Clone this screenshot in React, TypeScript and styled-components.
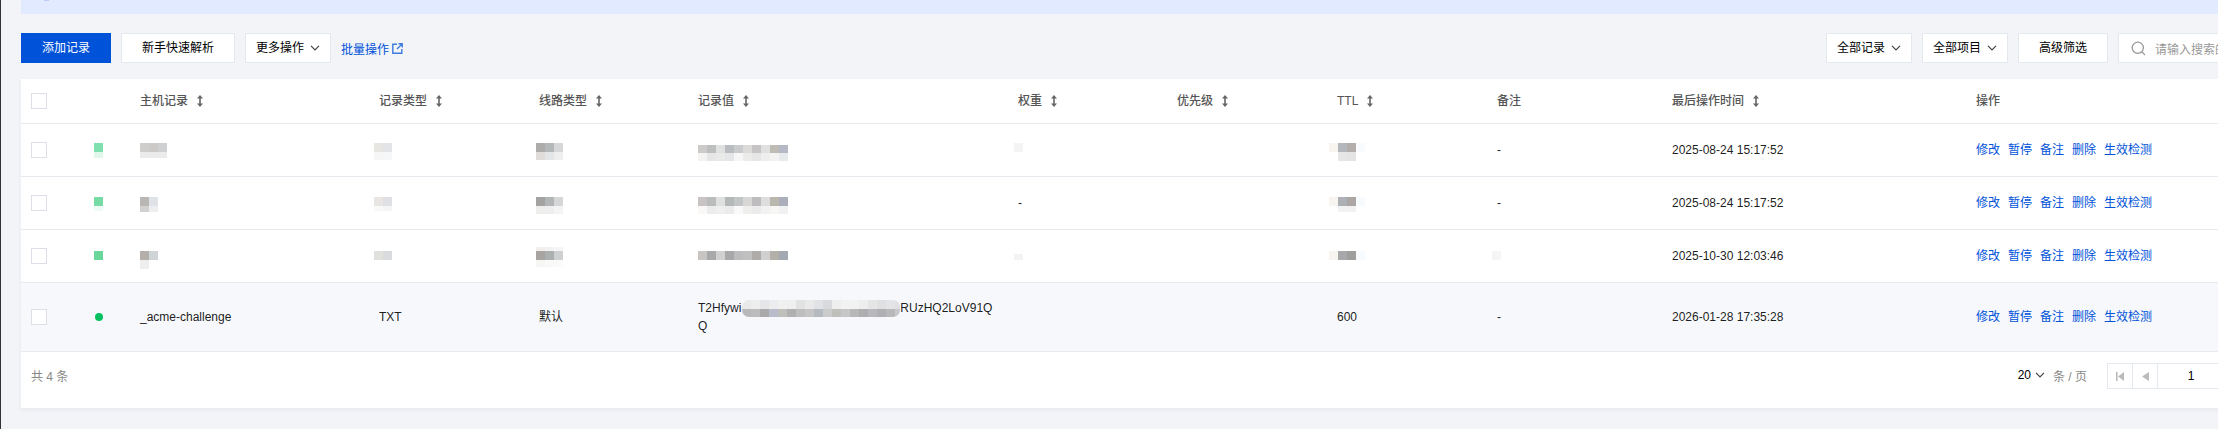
import React from "react";
import styled, { createGlobalStyle } from "styled-components";

const Global = createGlobalStyle`
  html, body { margin: 0; padding: 0; background: #f2f4f8; }
  body { font-family: "Liberation Sans", "Noto Sans CJK SC", sans-serif; font-size: 12px; color: rgba(0,0,0,.9); }
  svg { flex: none; }
`;

const Page = styled.div`
  width: 2218px; height: 429px; box-sizing: border-box; overflow: hidden;
  border-left: 1px solid #333; padding-left: 20px; background: #f2f4f8;
`;
const Banner = styled.div`height: 14px; background: #e1eaff;`;
const BannerMark = styled.div`width: 5px; height: 1px; margin-left: 23px; background: #b9cdf6;`;

const Toolbar = styled.div`display: flex; align-items: center; height: 30px; margin-top: 19px; gap: 10px;`;
const Btn = styled.button<{ $w: number; $primary?: boolean }>`
  box-sizing: border-box; width: ${p => p.$w}px; height: 30px; padding: 0; flex: none;
  display: inline-flex; align-items: center; justify-content: center; gap: 6px;
  font: inherit; line-height: 28px;
  border: 1px solid ${p => (p.$primary ? "#0052d9" : "#e4e8ef")};
  background: ${p => (p.$primary ? "#0052d9" : "#fff")};
  color: ${p => (p.$primary ? "#fff" : "#000")};
`;
const LinkText = styled.a`display: inline-flex; align-items: center; gap: 3px; color: #0052d9;`;
const Spacer = styled.div`flex: 1;`;
const Search = styled.div`
  box-sizing: border-box; width: 110px; height: 30px; flex: none; margin-right: -10px;
  display: flex; align-items: center; gap: 9px; padding-left: 12px; overflow: hidden; white-space: nowrap;
  background: #fff; border: 1px solid #e4e8ef; color: #999;
`;

const Table = styled.div`
  margin-top: 16px; background: #fff; box-shadow: 0 2px 4px rgba(54,58,80,.06);
`;
const cols = "73px 46px 239px 160px 159px 320px 159px 160px 160px 175px 304px 242px";
const Row = styled.div<{ $h: number; $active?: boolean }>`
  display: grid; grid-template-columns: ${cols}; box-sizing: border-box; height: ${p => p.$h}px;
  border-bottom: 1px solid #e7eaef; background: ${p => (p.$active ? "#f6f8fc" : "#fff")};
`;
const Cell = styled.div`display: flex; align-items: center; min-width: 0; line-height: 18px;`;
const CheckCell = styled(Cell)`padding-left: 10px;`;
const HeadCell = styled(Cell)`gap: 9px; color: #555; font-weight: 500;`;
const Checkbox = styled.span`
  box-sizing: border-box; display: block; width: 16px; height: 16px; background: #fff; border: 1px solid #dcdfe8;
`;
const Dot = styled.span`display: block; width: 8px; height: 8px; margin-left: 1px; border-radius: 50%; background: #07c160;`;

const Mosaic = styled.span<{ $top: number; $left?: number }>`
  display: flex; flex-direction: column; align-self: flex-start;
  margin-top: ${p => p.$top}px; margin-left: ${p => p.$left ?? 0}px;
`;
const MosaicRow = styled.span`display: flex;`;
const MosaicCell = styled.span<{ $c: string; $h: number; $w: number }>`
  display: block; flex: none; width: ${p => p.$w}px; height: ${p => p.$h}px; background: ${p => p.$c};
`;

const ValueLines = styled.div`display: flex; flex-direction: column;`;
const ValueLine = styled.div`display: flex; align-items: center; height: 18px; white-space: nowrap;`;
const Blur = styled.span`
  display: flex; flex-direction: column; width: 158px; height: 17px; margin: 0 0 0 1px;
  border-radius: 7px; overflow: hidden;
`;

const Actions = styled(Cell)`gap: 8px;`;
const ActionLink = styled.a`color: #0052d9;`;

const Footer = styled.div`
  display: flex; align-items: center; height: 56px; box-sizing: border-box; padding-left: 10px;
  padding-bottom: 10px; color: #888; overflow: hidden;
`;
const PageSize = styled.span`display: inline-flex; align-items: center; gap: 4px; color: #000;`;
const PerPage = styled.span`margin-left: 8px; margin-right: 20px;`;
const Pager = styled.div`
  display: flex; flex: none; height: 26px; box-sizing: border-box; border: 1px solid #e4e8ef; margin-right: -7px; margin-top: 2px;
`;
const PagerBtn = styled.span`
  box-sizing: border-box; width: 25px; display: flex; align-items: center; justify-content: center;
  border-right: 1px solid #e4e8ef;
`;
const PagerInput = styled.span`width: 66px; text-align: center; line-height: 24px; color: #000;`;

const Sort = () => (
  <svg width="6" height="12" viewBox="0 0 6 12" fill="#666">
    <path d="M3 0 6 3.6H3.8v4.8H6L3 12 0 8.4h2.2V3.6H0z" />
  </svg>
);
const Chevron = () => (
  <svg width="10" height="6" viewBox="0 0 10 6" fill="none" stroke="#444" strokeWidth="1.2">
    <path d="M1 .8 5 4.8 9 .8" />
  </svg>
);
const External = () => (
  <svg width="11" height="11" viewBox="0 0 11 11" fill="none" stroke="#3d7be0" strokeWidth="1.4">
    <path d="M5 1.2H.8v9h9V6M6.5.8h3.7v3.7M10 1 5 6" />
  </svg>
);
const SearchIcon = () => (
  <svg width="15" height="15" viewBox="0 0 15 15" fill="none" stroke="#999" strokeWidth="1.3">
    <circle cx="6.8" cy="6.8" r="5.6" />
    <path d="m11 11 3 3" />
  </svg>
);
const First = () => (
  <svg width="8" height="9" viewBox="0 0 8 9" fill="#bbb"><path d="M0 0h1.6v9H0zM8 0v9L2 4.500z" /></svg>
);
const Prev = () => (
  <svg width="7" height="9" viewBox="0 0 7 9" fill="#bbb"><path d="M7 0v9L0 4.500z" /></svg>
);

type M = { top: number; left?: number; w?: number; rows: { h: number; c: string[] }[] } | string;

const MosaicView = ({ m }: { m: M }) =>
  typeof m === "string" ? (
    <>{m}</>
  ) : (
    <Mosaic $top={m.top} $left={m.left}>
      {m.rows.map((r, i) => (
        <MosaicRow key={i}>
          {r.c.map((c, j) => (
            <MosaicCell key={j} $c={c} $h={r.h} $w={m.w ?? 9} />
          ))}
        </MosaicRow>
      ))}
    </Mosaic>
  );

const heads: [string, boolean][] = [
  ["主机记录", true], ["记录类型", true], ["线路类型", true], ["记录值", true],
  ["权重", true], ["优先级", true], ["TTL", true], ["备注", false], ["最后操作时间", true],
];
const acts = ["修改", "暂停", "备注", "删除", "生效检测"];

const blurRows = [
  { h: 9, c: ["#e9e9ea", "#eeeeee", "#e6e6e8", "#ececee", "#f0f0f1", "#efeff0", "#e2e2e4", "#e9e9ea", "#e1e2e5", "#d9dadd", "#eeeeee", "#f2f2f2", "#f2f2f3", "#eeeeef", "#e5e5e5", "#e0e0e3", "#e4e4e6", "#e0e0e3"] },
  { h: 8, c: ["#b9b9bc", "#bcbcbe", "#aaaaab", "#b9bdcb", "#c0c0ba", "#b0b0b0", "#bebebe", "#c5c5c5", "#b5bac0", "#cbcbcb", "#bfbfbc", "#c6c6c6", "#b8b8b8", "#aeaeb0", "#b8b8bc", "#b0b0b4", "#b8b8bb", "#c8c8ca"] },
];

const data: { status: M; cells: M[]; time: string }[] = [
  {
    status: { top: 19, rows: [{ h: 9, c: ["#80dfae"] }, { h: 6, c: ["#e0f7ea"] }] },
    cells: [
      { top: 19, rows: [{ h: 9, c: ["#cfcdcc", "#cbcac9", "#cfd0d1"] }, { h: 6, c: ["#ebebeb", "#ebebeb", "#ebebeb"] }] },
      { top: 19, left: -5, rows: [{ h: 9, c: ["#e8e6e3", "#e3e4e8"] }, { h: 8, c: ["#f6f6f6", "#f6f7f8"] }] },
      { top: 19, left: -3, rows: [{ h: 9, c: ["#adacab", "#b5b8b8", "#d6d7d8"] }, { h: 8, c: ["#dfdcda", "#e4e5e6", "#eeeeee"] }] },
      { top: 21, rows: [
        { h: 8, c: ["#cdcbca", "#bdbebe", "#e0e1e1", "#b9bcc0", "#c9cccc", "#dcdbd9", "#c6c4c4", "#e0e0e0", "#bfbcb6", "#b5b8c5"] },
        { h: 8, c: ["#f4f3f2", "#e6e6e7", "#e9e9e9", "#e4e6e8", "#f6f6f6", "#ebebe9", "#e6e6e6", "#eeeeee", "#f3f3f2", "#e8e9ea"] },
      ] },
      { top: 19, left: -4, rows: [{ h: 9, c: ["#f4f4f4"] }] },
      "",
      { top: 19, left: -8, rows: [{ h: 9, c: ["#f8f5f0", "#b3b7bb", "#b3aeac", "#f8fbfe"] }, { h: 9, c: ["#fff", "#e6e6e6", "#e4e4e4", "#fff"] }] },
      "-",
    ],
    time: "2025-08-24 15:17:52",
  },
  {
    status: { top: 20, rows: [{ h: 9, c: ["#76dba4"] }, { h: 5, c: ["#f1fbf6"] }] },
    cells: [
      { top: 20, rows: [{ h: 9, c: ["#b9b6b3", "#dfe2e6"] }, { h: 6, c: ["#d3d1d0", "#eceef0"] }] },
      { top: 20, left: -5, rows: [{ h: 9, c: ["#e8e5e2", "#dfe0e3"] }, { h: 5, c: ["#f9f9f9", "#f5f5f5"] }] },
      { top: 20, left: -3, rows: [{ h: 9, c: ["#a5a3a2", "#b3b6b7", "#d5d6d7"] }, { h: 8, c: ["#eeeeed", "#eeeeee", "#f4f4f4"] }] },
      { top: 20, rows: [
        { h: 9, c: ["#c9c4c3", "#bbbdbd", "#dfe1e0", "#b5b8b8", "#c2c6c6", "#d8d7d6", "#bfbcc0", "#dddddd", "#bab8ae", "#abafbc"] },
        { h: 8, c: ["#f9f8f7", "#ececec", "#efefef", "#ebebec", "#f9f9f9", "#efefed", "#ebebeb", "#f2f2f2", "#f6f6f5", "#f0f1f2"] },
      ] },
      "-",
      "",
      { top: 20, left: -8, rows: [{ h: 9, c: ["#f8f5f0", "#adb0b5", "#aca7a5", "#f8fbfe"] }, { h: 6, c: ["#fff", "#f2f2f2", "#f2f2f2", "#fff"] }] },
      "-",
    ],
    time: "2025-08-24 15:17:52",
  },
  {
    status: { top: 21, rows: [{ h: 9, c: ["#69d69a"] }] },
    cells: [
      { top: 21, rows: [{ h: 9, c: ["#b5afab", "#cfd4d7"] }, { h: 9, c: ["#eeeeee", "transparent"] }] },
      { top: 21, left: -5, rows: [{ h: 9, c: ["#e0e0dc", "#d9dbde"] }] },
      { top: 17, left: -3, rows: [{ h: 4, c: ["#f2f0ef", "#f2f2f2", "#f5f5f5"] }, { h: 9, c: ["#a8a4a1", "#abafb0", "#cfd0d1"] }, { h: 7, c: ["#f6f6f4", "#f9f9f8", "#fafafa"] }] },
      { top: 21, rows: [{ h: 9, c: ["#c8c4c1", "#a9a9a9", "#d0d0d0", "#a8a8aa", "#bcbcbe", "#c0c0c0", "#aeaba9", "#d0d0d0", "#b2b0a8", "#a4a8b2"] }] },
      { top: 24, left: -4, rows: [{ h: 6, c: ["#f3f3f3"] }] },
      "",
      { top: 21, left: -8, rows: [{ h: 9, c: ["#f8f5f0", "#a8a7ab", "#a09d9d", "#f8fbfe"] }] },
      { top: 21, left: -5, rows: [{ h: 9, c: ["#f5f5f5"] }] },
    ],
    time: "2025-10-30 12:03:46",
  },
];

const ActionCell = () => (
  <Actions>
    {acts.map(a => (
      <ActionLink key={a}>{a}</ActionLink>
    ))}
  </Actions>
);

export default function App() {
  return (
    <Page>
      <Global />
      <Banner>
        <BannerMark />
      </Banner>
      <Toolbar>
        <Btn $w={90} $primary>添加记录</Btn>
        <Btn $w={114}>新手快速解析</Btn>
        <Btn $w={86}>更多操作<Chevron /></Btn>
        <LinkText>批量操作<External /></LinkText>
        <Spacer />
        <Btn $w={86}>全部记录<Chevron /></Btn>
        <Btn $w={86}>全部项目<Chevron /></Btn>
        <Btn $w={90}>高级筛选</Btn>
        <Search>
          <SearchIcon />
          请输入搜索的内容
        </Search>
      </Toolbar>
      <Table>
        <Row $h={45}>
          <CheckCell><Checkbox /></CheckCell>
          <Cell />
          {heads.map(([h, s]) => (
            <HeadCell key={h}>
              {h}
              {s && <Sort />}
            </HeadCell>
          ))}
          <HeadCell>操作</HeadCell>
        </Row>
        {data.map((r, i) => (
          <Row $h={53} key={i}>
            <CheckCell><Checkbox /></CheckCell>
            <Cell><MosaicView m={r.status} /></Cell>
            {r.cells.map((c, j) => (
              <Cell key={j}><MosaicView m={c} /></Cell>
            ))}
            <Cell>{r.time}</Cell>
            <ActionCell />
          </Row>
        ))}
        <Row $h={69} $active>
          <CheckCell><Checkbox /></CheckCell>
          <Cell><Dot /></Cell>
          <Cell>_acme-challenge</Cell>
          <Cell>TXT</Cell>
          <Cell>默认</Cell>
          <Cell>
            <ValueLines>
              <ValueLine>
                T2Hfywi
                <Blur>
                  {blurRows.map((r, i) => (
                    <MosaicRow key={i}>
                      {r.c.map((c, j) => (
                        <MosaicCell key={j} $c={c} $h={r.h} $w={9} />
                      ))}
                    </MosaicRow>
                  ))}
                </Blur>
                RUzHQ2LoV91Q
              </ValueLine>
              <ValueLine>Q</ValueLine>
            </ValueLines>
          </Cell>
          <Cell />
          <Cell />
          <Cell>600</Cell>
          <Cell>-</Cell>
          <Cell>2026-01-28 17:35:28</Cell>
          <ActionCell />
        </Row>
        <Footer>
          共 4 条
          <Spacer />
          <PageSize>20<Chevron /></PageSize>
          <PerPage>条 / 页</PerPage>
          <Pager>
            <PagerBtn><First /></PagerBtn>
            <PagerBtn><Prev /></PagerBtn>
            <PagerInput>1</PagerInput>
          </Pager>
        </Footer>
      </Table>
    </Page>
  );
}
